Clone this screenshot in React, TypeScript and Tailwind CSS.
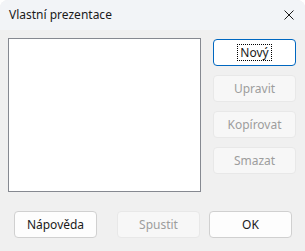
import React from "react";

const font = { fontFamily: '"Noto Sans", "Open Sans", sans-serif' };

function Btn(props: { label: string; disabled?: boolean; primary?: boolean; className?: string }) {
  if (props.primary) {
    return (
      <div className={"w-[83px] h-[27px] rounded-[4px] border-[1.5px] border-[#0067c0] bg-white flex items-center justify-center " + (props.className || "")}>
        <span className="px-[2px] leading-[15px] outline-1 outline-dotted outline-black text-[12px] text-[#1a1a1a]">{props.label}</span>
      </div>
    );
  }
  return (
    <div
      className={
        "w-[83px] h-[27px] rounded-[4px] border flex items-center justify-center text-[12px] " +
        (props.disabled
          ? "border-[#e8e8e8] bg-[#f7f7f7] text-[#9d9d9d] "
          : "border-[#d0d0d0] bg-[#fdfdfd] text-[#1a1a1a] ") +
        (props.className || "")
      }
    >
      {props.label}
    </div>
  );
}

export default function App() {
  return (
    <div className="w-[305px] h-[251px] bg-[#f0f0f0] rounded-t-[8px] overflow-hidden flex flex-col" style={font}>
      <div className="h-[30px] bg-[#f2f4f7] flex items-center justify-between pl-[9px] pr-[11px]">
        <span className="text-[12px] text-[#1a1a1a]">Vlastní prezentace</span>
        <svg width="10" height="10" viewBox="0 0 10 10">
          <path d="M0.5 0.5 L9.5 9.5 M9.5 0.5 L0.5 9.5" stroke="#1a1a1a" strokeWidth="1" />
        </svg>
      </div>
      <div className="flex pl-[8px] pt-[8px]">
        <div className="w-[193px] h-[154px] bg-white border border-[#868991]"></div>
        <div className="flex flex-col gap-[9px] ml-[12px] pt-[1px]">
          <Btn label="Nový" primary />
          <Btn label="Upravit" disabled />
          <Btn label="Kopírovat" disabled />
          <Btn label="Smazat" disabled />
        </div>
      </div>
      <div className="flex pl-[14px] mt-[19px]">
        <Btn label="Nápověda" />
        <Btn label="Spustit" disabled className="ml-[20px]" />
        <Btn label="OK" className="ml-[9px]" />
      </div>
    </div>
  );
}
